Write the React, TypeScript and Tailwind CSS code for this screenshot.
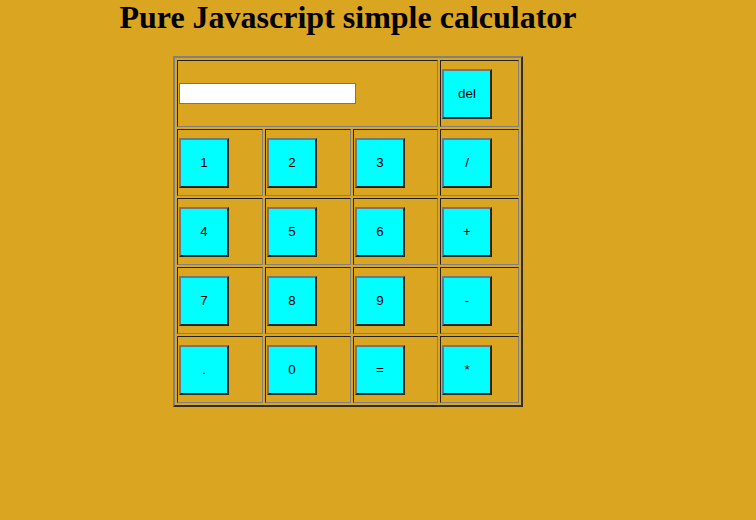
import React from "react";

const Cell = ({ children, className = "" }: { children?: React.ReactNode; className?: string }) => (
  <div
    className={
      "h-[67px] flex items-center p-px border border-t-[#222222] border-l-[#222222] border-b-[#808080] border-r-[#808080] " +
      className
    }
  >
    {children}
  </div>
);

const Btn = ({ label }: { label: string }) => (
  <button
    className="w-[50px] h-[50px] bg-[#00ffff] text-black text-[13.33px] border-2 border-t-[#767676] border-l-[#767676] border-b-[#222222] border-r-[#222222] flex items-center justify-center"
    style={{ fontFamily: '"Liberation Sans", Arial, sans-serif' }}
  >
    {label}
  </button>
);

export default function App() {
  const rows = [
    ["1", "2", "3", "/"],
    ["4", "5", "6", "+"],
    ["7", "8", "9", "-"],
    [".", "0", "=", "*"],
  ];
  return (
    <div className="w-full min-h-[520px] bg-[#daa520]">
      <div className="w-[696px] flex flex-col items-center">
        <h1
          className="m-0 text-[32px] font-bold leading-[35px] text-black"
          style={{ fontFamily: '"Liberation Serif", "Times New Roman", serif' }}
        >
          Pure Javascript simple calculator
        </h1>
        <div className="mt-[21px] border-2 border-t-[#808080] border-l-[#808080] border-b-[#2b2b2b] border-r-[#2b2b2b] p-[2px]">
          <div className="grid grid-cols-[86px_86px_85px_79px] gap-[2px]">
            <Cell className="col-span-3">
              <input
                type="text"
                className="w-[177px] h-[21px] bg-white border border-[#767676] outline-none"
              />
            </Cell>
            <Cell>
              <Btn label="del" />
            </Cell>
            {rows.flat().map((l, i) => (
              <Cell key={i}>
                <Btn label={l} />
              </Cell>
            ))}
          </div>
        </div>
      </div>
    </div>
  );
}
